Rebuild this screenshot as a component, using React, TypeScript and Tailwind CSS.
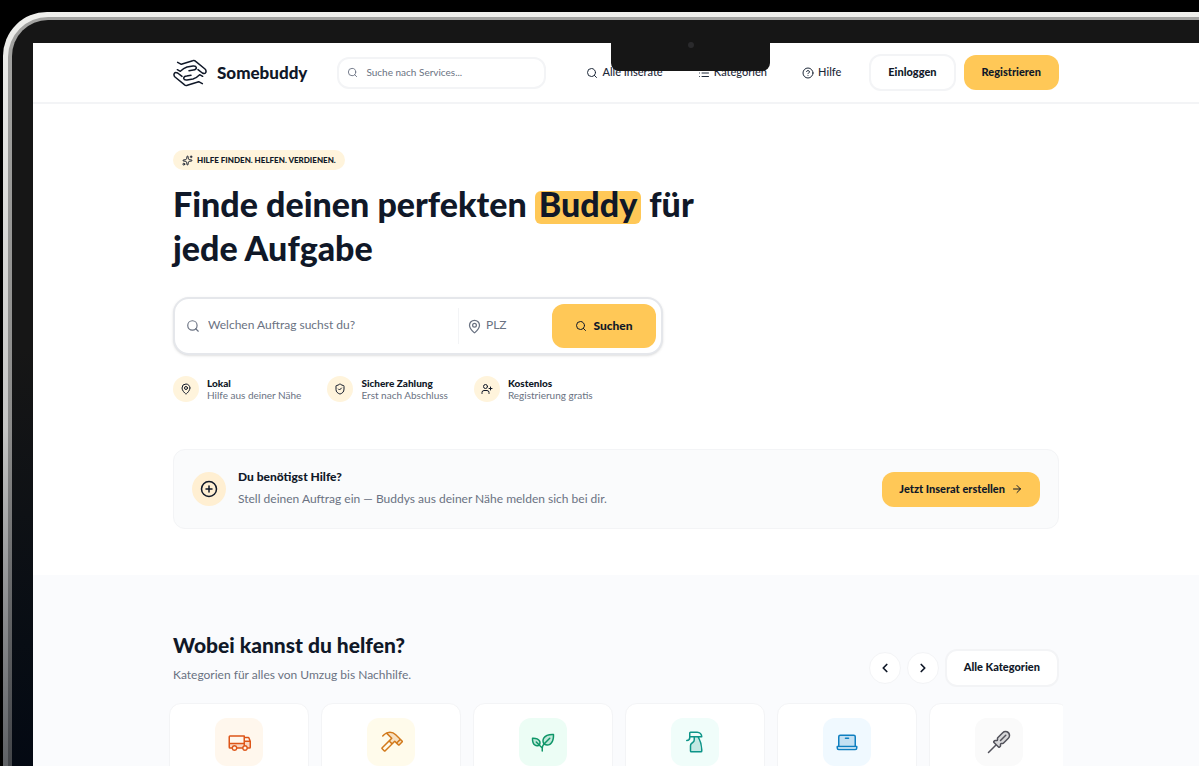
import React, { useState } from 'react';
import {
  ArrowRight,
  ChevronLeft,
  ChevronRight,
  CircleHelp,
  CirclePlus,
  List,
  MapPin,
  Search,
  ShieldCheck,
  Sparkles,
  UserPlus,
} from 'lucide-react';
import {
  PiHammerDuotone,
  PiLaptopDuotone,
  PiPlantDuotone,
  PiScrewdriverDuotone,
  PiSprayBottleDuotone,
  PiTruckDuotone,
} from 'react-icons/pi';

const benefits = [
  { icon: MapPin, title: 'Lokal', text: 'Hilfe aus deiner Nähe' },
  { icon: ShieldCheck, title: 'Sichere Zahlung', text: 'Erst nach Abschluss' },
  { icon: UserPlus, title: 'Kostenlos', text: 'Registrierung gratis' },
];

const categories = [
  { icon: PiTruckDuotone, label: 'Umzug', tile: 'bg-orange-50 text-[#dd5518]' },
  { icon: PiHammerDuotone, label: 'Handwerk', tile: 'bg-amber-50 text-[#d27a1c]' },
  { icon: PiPlantDuotone, label: 'Garten', tile: 'bg-emerald-50 text-[#0f9668]' },
  { icon: PiSprayBottleDuotone, label: 'Reinigung', tile: 'bg-teal-50 text-[#0d9488]' },
  { icon: PiLaptopDuotone, label: 'Computer', tile: 'bg-sky-50 text-[#0f7fc0]' },
  { icon: PiScrewdriverDuotone, label: 'Montage', tile: 'bg-zinc-50 text-[#52525b]' },
];

function HandsLogo() {
  return (
    <svg viewBox="0 0 102 82" className="h-7 w-[34px]" fill="none" stroke="currentColor" strokeWidth="4.5" strokeLinecap="round" strokeLinejoin="round" aria-hidden="true">
      <g id="hand">
        <path d="M14 9 L25 15 L59 4 Q64 2 68 6 L96 29 Q101 34 98 40 Q95 45 88 41 L75 31" />
        <path d="M13 31 L22 36 Q32 26 42 23 L60 20 Q69 19 70 25 Q70 31 61 32 L48 34" />
      </g>
      <use href="#hand" transform="rotate(180 51 41)" />
    </svg>
  );
}

function Header() {
  return (
    <header className="border-b-2 border-gray-100">
      <div className="mx-auto flex h-[59px] max-w-[886px] items-center">
        <a href="#" className="flex items-center gap-2.5 text-[17px] font-black text-gray-900">
          <HandsLogo />
          Somebuddy
        </a>
        <label className="ml-[30px] flex h-8 w-[209px] shrink-0 items-center gap-2 rounded-xl border-2 border-gray-100 px-2 text-gray-500">
          <Search size={11} className="shrink-0" />
          <input type="search" aria-label="Services suchen" placeholder="Suche nach Services..." className="w-full min-w-0 bg-transparent text-[10px] outline-none placeholder:text-gray-500" />
        </label>
        <nav className="ml-10 flex flex-1 items-center justify-between text-[11px] font-medium text-gray-800">
          <a href="#inserate" className="flex items-center gap-1"><Search size={12} />Alle Inserate</a>
          <a href="#kategorien" className="flex items-center gap-1"><List size={12} />Kategorien</a>
          <a href="#hilfe" className="flex items-center gap-1"><CircleHelp size={12} />Hilfe</a>
        </nav>
        <div className="ml-7 flex items-center gap-2 text-[11px] font-black text-gray-900">
          <button className="h-[37px] rounded-xl border-2 border-gray-100 px-[17px]">Einloggen</button>
          <button className="h-[35px] rounded-xl bg-[#ffc857] px-[18px]">Registrieren</button>
        </div>
      </div>
    </header>
  );
}

function SearchForm() {
  return (
    <form onSubmit={(e) => e.preventDefault()} className="mt-[27px] flex h-[58px] max-w-[490px] items-center rounded-2xl border-2 border-gray-200 bg-white p-[5px] shadow-sm">
      <label className="flex flex-1 items-center gap-2 pl-1.5 text-gray-500">
        <Search size={14} className="shrink-0" />
        <input aria-label="Auftrag" placeholder="Welchen Auftrag suchst du?" className="w-full min-w-0 pb-0.5 text-xs outline-none placeholder:text-gray-500" />
      </label>
      <label className="flex h-9 w-[94px] items-center gap-1 border-l border-gray-100 pl-2 text-gray-500">
        <MapPin size={15} className="shrink-0" />
        <input aria-label="PLZ" placeholder="PLZ" className="w-full min-w-0 pb-0.5 text-xs outline-none placeholder:text-gray-500" />
      </label>
      <button type="submit" className="flex h-11 w-[104px] items-center justify-center gap-1.5 rounded-xl bg-[#ffc857] text-xs font-black text-gray-900">
        <Search size={12} />
        Suchen
      </button>
    </form>
  );
}

function Hero() {
  return (
    <section className="mx-auto w-full max-w-[886px] pt-[46px] pb-[46px]">
      <p className="flex h-5 w-fit items-center gap-1 rounded-full bg-[#fff4dc] px-[9px] text-[8px] font-black text-gray-900">
        <Sparkles size={11} />
        HILFE FINDEN. HELFEN. VERDIENEN.
      </p>
      <h1 className="mt-3 max-w-[560px] text-[34px] leading-[44px] font-black text-gray-900">
        Finde deinen perfekten <span className="inline-block rounded-md bg-[#ffc857] px-1 pb-2 leading-[25px]">Buddy</span> für jede Aufgabe
      </h1>
      <SearchForm />
      <ul className="mt-[21px] flex gap-[26px]">
        {benefits.map(({ icon: Icon, title, text }) => (
          <li key={title} className="flex items-center gap-2">
            <span className="flex size-[26px] items-center justify-center rounded-full bg-[#fff4dc] text-gray-900">
              <Icon size={12} />
            </span>
            <span className="text-[10px] leading-3 text-gray-500">
              <strong className="block font-black text-gray-900">{title}</strong>
              {text}
            </span>
          </li>
        ))}
      </ul>
      <div className="mt-[47px] flex h-20 items-center rounded-xl border border-gray-100 bg-[#fafbfc] px-[18px]">
        <span className="flex size-[34px] items-center justify-center rounded-full bg-[#ffefd2] text-gray-900">
          <CirclePlus size={18} />
        </span>
        <div className="ml-3 flex-1">
          <h2 className="text-xs leading-5 font-black text-gray-900">Du benötigst Hilfe?</h2>
          <p className="text-xs leading-6 text-gray-500">Stell deinen Auftrag ein — Buddys aus deiner Nähe melden sich bei dir.</p>
        </div>
        <button className="flex h-[35px] items-center gap-1.5 rounded-xl bg-[#ffc857] px-[17px] text-[11px] font-black text-gray-900">
          Jetzt Inserat erstellen
          <ArrowRight size={12} />
        </button>
      </div>
    </section>
  );
}

function Categories() {
  const [start, setStart] = useState(0);
  const shown = [...categories.slice(start), ...categories.slice(0, start)];
  const move = (step: number) => setStart((start + step + categories.length) % categories.length);

  return (
    <section id="kategorien" className="flex-1 bg-[#fafbfd] pt-[58px]">
      <div className="mx-auto max-w-[886px]">
        <div className="flex items-end justify-between">
          <div className="pb-0.5">
            <h2 className="text-[21px] leading-6 font-black text-gray-900">Wobei kannst du helfen?</h2>
            <p className="mt-2 text-xs leading-5 text-gray-500">Kategorien für alles von Umzug bis Nachhilfe.</p>
          </div>
          <div className="flex items-center gap-1.5">
            <button aria-label="Zurück" onClick={() => move(-1)} className="flex size-8 items-center justify-center rounded-full border border-gray-100 bg-white text-gray-900">
              <ChevronLeft size={14} strokeWidth={3} />
            </button>
            <button aria-label="Weiter" onClick={() => move(1)} className="flex size-8 items-center justify-center rounded-full border border-gray-100 bg-white text-gray-900">
              <ChevronRight size={14} strokeWidth={3} />
            </button>
            <button className="h-[38px] rounded-xl border-2 border-gray-100 bg-white px-[17px] pb-0.5 text-[11px] font-black text-gray-900">Alle Kategorien</button>
          </div>
        </div>
        <div className="-mx-1 mt-4 flex gap-3 overflow-hidden">
          {shown.map(({ icon: Icon, label, tile }) => (
            <a key={label} href="#kategorien" aria-label={label} className="flex h-[140px] w-[140px] shrink-0 justify-center rounded-xl border border-gray-100 bg-white pt-[14px]">
              <span className={`flex size-12 items-center justify-center rounded-xl ${tile}`}>
                <Icon size={24} />
              </span>
            </a>
          ))}
        </div>
      </div>
    </section>
  );
}

export default function App() {
  return (
    <div className="h-screen overflow-hidden bg-black pt-3 pl-[3px] font-['Lato','Liberation_Sans',sans-serif]">
      <div className="rounded-tl-[44px] bg-linear-to-b from-[#efefec] via-[#c4c4c3] to-[#4a4d52] pt-[5px] pl-[5px]">
        <div className="rounded-tl-[40px] bg-linear-to-b from-[#a3a3a1] via-[#8a8a89] to-[#33363b] pt-[3px] pl-1">
          <div className="relative rounded-tl-[36px] bg-linear-to-b from-[#161616] from-40% to-[#020712] pt-[23px] pl-[21px]">
            <div className="flex min-h-screen flex-col bg-white">
              <Header />
              <Hero />
              <Categories />
            </div>
            <div className="absolute top-[22px] left-[599px] h-[29px] w-[159px] rounded-b-lg bg-[#161616]">
              <span className="mx-auto block size-[6px] rounded-full bg-[#2a2a2c]" />
            </div>
          </div>
        </div>
      </div>
    </div>
  );
}
